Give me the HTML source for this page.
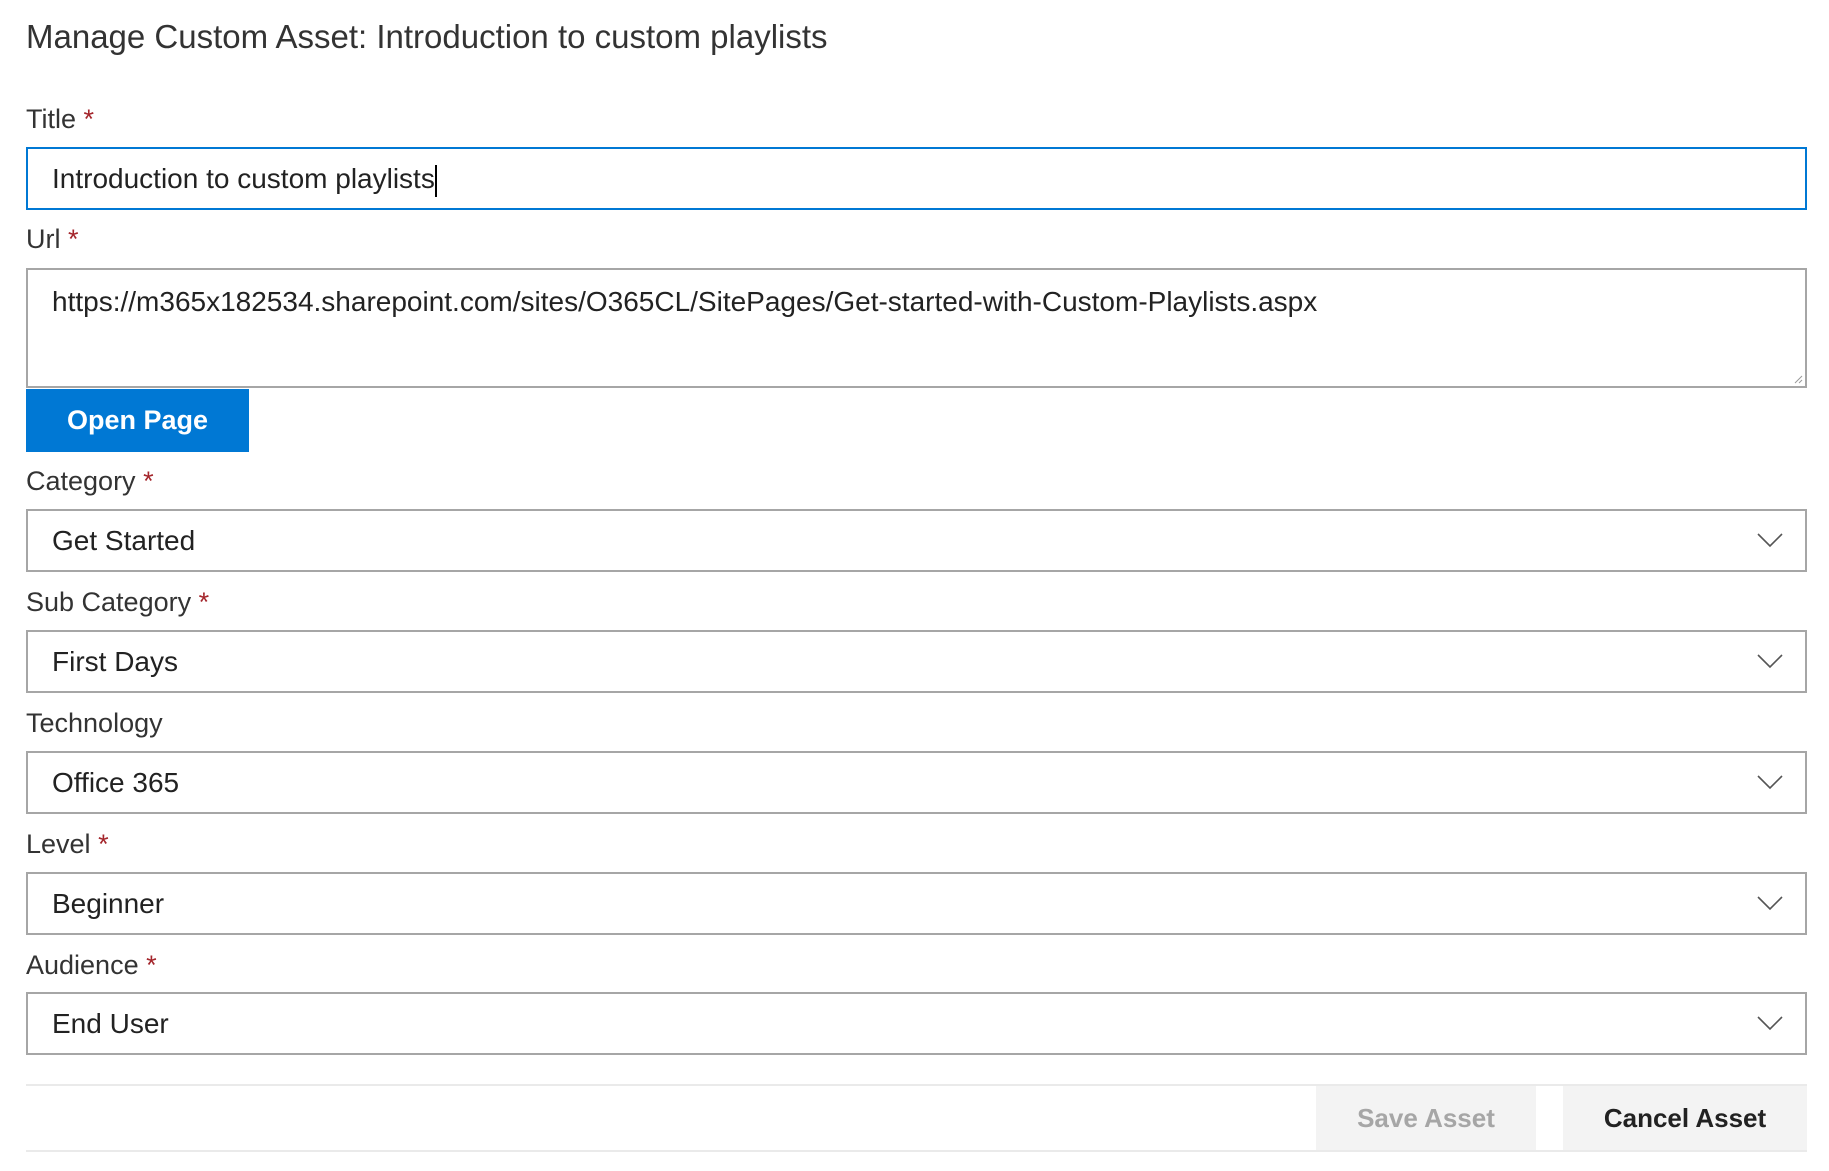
<!DOCTYPE html>
<html><head><meta charset="utf-8"><style>
*{box-sizing:border-box;margin:0;padding:0}
body{width:1829px;height:1171px;background:#fff;font-family:"Liberation Sans",sans-serif;color:#333;position:relative;overflow:hidden}
.a{position:absolute}
h1{position:absolute;left:26px;top:18px;font-size:33px;font-weight:normal;color:#333}
.lbl{position:absolute;left:26px;font-size:27px;color:#333}
.lbl span{color:#a4262c}
.box{position:absolute;left:26px;width:1781px;height:63px;border:2px solid #a6a6a6;font-size:28px;color:#222;padding-left:24px;line-height:59px}
.box svg{position:absolute;right:22px;top:21px}
</style></head><body>
<h1>Manage Custom Asset: Introduction to custom playlists</h1>
<div class="lbl" style="top:104px">Title <span>*</span></div>
<div class="box" style="top:147px;border-color:#0078d4">Introduction to custom playlists<span style="display:inline-block;width:2px;height:32px;background:#000;vertical-align:middle"></span></div>
<div class="lbl" style="top:224px">Url <span>*</span></div>
<div class="box" style="top:268px;height:120px;line-height:1;padding-top:18px">https://m365x182534.sharepoint.com/sites/O365CL/SitePages/Get-started-with-Custom-Playlists.aspx
<svg width="10" height="10" style="right:2px;top:auto;bottom:2px"><path d="M9 2L2 9M9 6L6 9" stroke="#999"/></svg></div>
<div class="a" style="left:26px;top:389px;width:223px;height:63px;background:#0078d4;color:#fff;font-weight:bold;font-size:27px;text-align:center;line-height:63px">Open Page</div>
<div class="lbl" style="top:466px">Category <span>*</span></div>
<div class="box" style="top:509px">Get Started<svg width="26" height="16"><path d="M1 2L13 14L25 2" fill="none" stroke="#555" stroke-width="1.6"/></svg></div>
<div class="lbl" style="top:587px">Sub Category <span>*</span></div>
<div class="box" style="top:630px">First Days<svg width="26" height="16"><path d="M1 2L13 14L25 2" fill="none" stroke="#555" stroke-width="1.6"/></svg></div>
<div class="lbl" style="top:708px">Technology</div>
<div class="box" style="top:751px">Office 365<svg width="26" height="16"><path d="M1 2L13 14L25 2" fill="none" stroke="#555" stroke-width="1.6"/></svg></div>
<div class="lbl" style="top:829px">Level <span>*</span></div>
<div class="box" style="top:872px">Beginner<svg width="26" height="16"><path d="M1 2L13 14L25 2" fill="none" stroke="#555" stroke-width="1.6"/></svg></div>
<div class="lbl" style="top:950px">Audience <span>*</span></div>
<div class="box" style="top:992px">End User<svg width="26" height="16"><path d="M1 2L13 14L25 2" fill="none" stroke="#555" stroke-width="1.6"/></svg></div>
<div class="a" style="left:26px;top:1084px;width:1781px;height:2px;background:#eaeaea"></div>
<div class="a" style="left:26px;top:1150px;width:1781px;height:2px;background:#eaeaea"></div>
<div class="a" style="left:1316px;top:1086px;width:220px;height:64px;background:#f3f3f3;color:#a6a6a6;font-weight:bold;font-size:26px;text-align:center;line-height:64px">Save Asset</div>
<div class="a" style="left:1563px;top:1086px;width:244px;height:64px;background:#f3f3f3;color:#222;font-weight:bold;font-size:26px;text-align:center;line-height:64px">Cancel Asset</div>
</body></html>
